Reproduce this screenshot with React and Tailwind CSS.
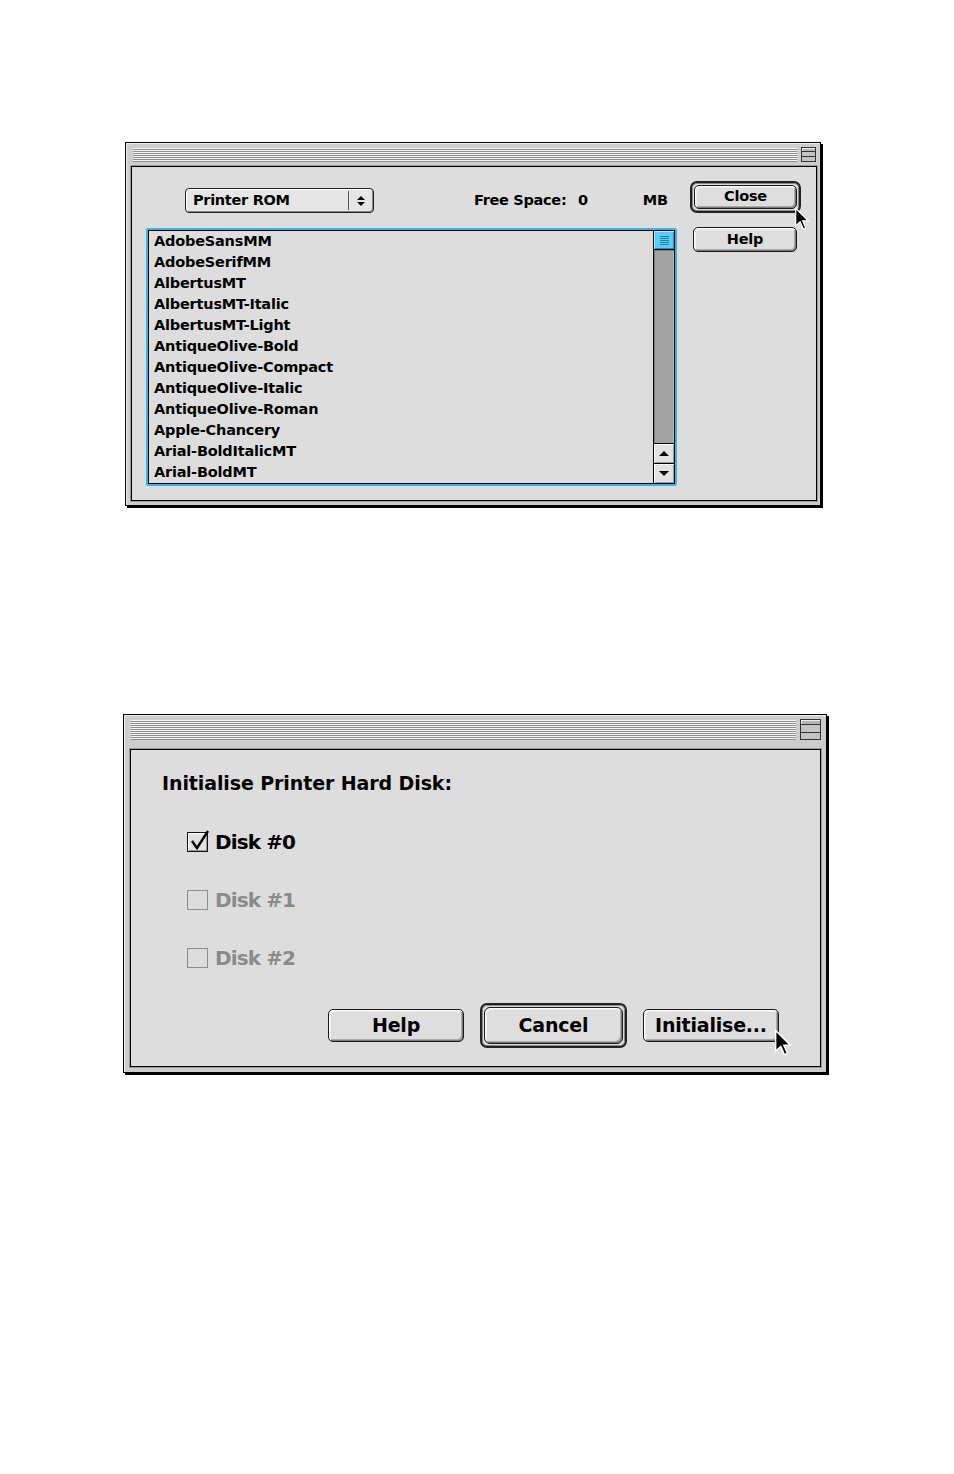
import React from "react";

const font = "font-['DejaVu_Sans',sans-serif]";

const fonts = [
  "AdobeSansMM",
  "AdobeSerifMM",
  "AlbertusMT",
  "AlbertusMT-Italic",
  "AlbertusMT-Light",
  "AntiqueOlive-Bold",
  "AntiqueOlive-Compact",
  "AntiqueOlive-Italic",
  "AntiqueOlive-Roman",
  "Apple-Chancery",
  "Arial-BoldItalicMT",
  "Arial-BoldMT",
];

function Cursor({ className, w = 16, h = 24 }) {
  return (
    <svg className={className} width={w} height={h} viewBox="0 0 12 19">
      <path
        d="M1 1 L1 15 L4.5 11.8 L7 17.5 L9 16.6 L6.6 11 L11 11 Z"
        fill="#000"
        stroke="#fff"
        strokeWidth="1"
        strokeLinejoin="miter"
      />
    </svg>
  );
}

function Btn({ children, className = "" }) {
  return (
    <div
      className={`flex items-center justify-center rounded-[5px] border border-[#1a1a1a] bg-[#dedede] shadow-[inset_1px_1px_0_#fff,inset_2px_2px_0_#eeeeee,inset_-1px_-1px_0_#777,inset_-2px_-2px_0_#aaa] font-bold text-black ${className}`}
    >
      {children}
    </div>
  );
}

function DefaultBtn({ children, className = "", inner = "" }) {
  return (
    <div
      className={`flex items-stretch rounded-[7px] border-2 border-[#222] bg-[#dedede] p-[2px] shadow-[inset_0_0_0_1px_#888] ${className}`}
    >
      <Btn className={`flex-1 ${inner}`}>{children}</Btn>
    </div>
  );
}

function Stripes({ className = "" }) {
  return (
    <div
      className={`bg-[repeating-linear-gradient(to_bottom,#f4f4f4_0px,#f4f4f4_1px,#8e8e8e_1px,#8e8e8e_2px)] ${className}`}
    />
  );
}

function ZoomBox({ className = "" }) {
  return (
    <div
      className={`flex flex-col border border-[#333] bg-[#b5b5b5] shadow-[inset_1px_1px_0_#eee] ${className}`}
    >
      <div className="h-[28%] border-b border-[#333]" />
      <div className="flex-1 border-b border-[#333] bg-[#c4c4c4]" />
      <div className="flex-1 bg-[#c4c4c4]" />
    </div>
  );
}

function Checkbox({ checked, disabled, label }) {
  return (
    <div className="flex h-[24px] items-center">
      <div
        className={`relative h-[20px] w-[21px] border ${
          disabled
            ? "border-[#8d8d8d] bg-[#dcdcdc]"
            : "border-[#111] bg-[#e2e2e2] shadow-[inset_1px_1px_0_#fff,inset_-1px_-1px_0_#999]"
        }`}
      >
        {checked && (
          <svg
            className="absolute left-[1px] top-[-4px]"
            width="22"
            height="22"
            viewBox="0 0 22 22"
          >
            <path
              d="M3 12 L8 19 L19 2"
              fill="none"
              stroke="#000"
              strokeWidth="2.4"
            />
          </svg>
        )}
      </div>
      <span
        className={`ml-[7px] text-[20px] font-bold tracking-[-0.9px] ${
          disabled ? "text-[#8a8a8a]" : "text-black"
        }`}
      >
        {label}
      </span>
    </div>
  );
}

function FontDialog() {
  return (
    <div className="relative ml-[125px] mt-[142px] flex h-[364px] w-[696px] flex-col border border-black bg-[#cdcdcd] shadow-[2px_2px_0_#000,inset_1px_1px_0_#eee]">
      <div className="flex h-[23px] items-center pl-[7px] pr-[4px]">
        <Stripes className="h-[14px] flex-1" />
        <ZoomBox className="ml-[4px] h-[15px] w-[15px]" />
      </div>
      <div className="mb-[4px] ml-[5px] mr-[3px] flex flex-1 border border-black bg-[#dddddd] pl-[14px] pt-[14px] shadow-[0_0_0_1px_#9a9a9a]">
        <div className="flex w-[531px] flex-col">
          <div className="mt-[7px] flex h-[25px] items-center text-[14.5px] font-bold tracking-[-0.3px]">
            <div className="ml-[39px] flex h-[25px] w-[189px] items-stretch rounded-[4px] border border-[#222] bg-[#e6e6e6] shadow-[inset_1px_1px_0_#fff,inset_-1px_-1px_0_#888]">
              <span className="flex flex-1 items-center pl-[7px]">
                Printer ROM
              </span>
              <div className="my-[2px] w-px bg-[#555]" />
              <div className="flex w-[24px] flex-col items-center justify-center gap-[2px]">
                <div className="h-0 w-0 border-x-[4px] border-b-[4px] border-x-transparent border-b-black" />
                <div className="h-0 w-0 border-x-[4px] border-t-[4px] border-x-transparent border-t-black" />
              </div>
            </div>
            <span className="ml-[100px] w-[104px]">Free Space:</span>
            <span>0</span>
            <span className="ml-[55px]">MB</span>
          </div>
          <div className="mt-[15px] h-[258px] w-[531px] rounded-[2px] border-2 border-[#34b4e4]">
            <div className="flex h-full border border-black bg-[#dddddd]">
              <div className="flex-1 overflow-hidden pl-[5px] text-[14.5px] font-bold leading-[21px] tracking-[-0.2px] text-black">
                {fonts.map((f) => (
                  <div key={f} className="h-[21px]">
                    {f}
                  </div>
                ))}
              </div>
              <div className="flex w-[21px] flex-col border-l border-black">
                <div className="flex h-[19px] flex-col items-center justify-center gap-[1px] border-b border-black bg-[#5ccdf5] shadow-[inset_1px_1px_0_#aee8ff,inset_-1px_-1px_0_#1c8fc0]">
                  <div className="h-px w-[9px] bg-[#1f7fae]" />
                  <div className="h-px w-[9px] bg-[#1f7fae]" />
                  <div className="h-px w-[9px] bg-[#1f7fae]" />
                  <div className="h-px w-[9px] bg-[#1f7fae]" />
                  <div className="h-px w-[9px] bg-[#1f7fae]" />
                </div>
                <div className="flex-1 bg-[#a3a3a3] shadow-[inset_1px_1px_0_#7a7a7a,inset_-1px_0_0_#bbb]" />
                <div className="flex h-[20px] items-center justify-center border-t border-black bg-[#e2e2e2] shadow-[inset_1px_1px_0_#fff,inset_-1px_-1px_0_#999]">
                  <div className="h-0 w-0 border-x-[5px] border-b-[5px] border-x-transparent border-b-black" />
                </div>
                <div className="flex h-[20px] items-center justify-center border-t border-black bg-[#e2e2e2] shadow-[inset_1px_1px_0_#fff,inset_-1px_-1px_0_#999]">
                  <div className="h-0 w-0 border-x-[5px] border-t-[5px] border-x-transparent border-t-black" />
                </div>
              </div>
            </div>
          </div>
        </div>
        <div className="ml-[13px] flex flex-col text-[14.5px] tracking-[-0.2px]">
          <DefaultBtn className="h-[32px] w-[111px]">Close</DefaultBtn>
          <Btn className="ml-[3px] mt-[14px] h-[25px] w-[104px]">Help</Btn>
        </div>
      </div>
      <Cursor className="absolute left-[668px] top-[64px]" />
    </div>
  );
}

function InitDialog() {
  return (
    <div className="relative ml-[123px] mt-[208px] flex h-[359px] w-[704px] flex-col border border-black bg-[#cdcdcd] shadow-[2px_2px_0_#000,inset_1px_1px_0_#eee]">
      <div className="flex h-[27px] items-center pl-[7px] pr-[5px] pt-[2px]">
        <Stripes className="h-[20px] flex-1" />
        <ZoomBox className="ml-[4px] h-[21px] w-[21px]" />
      </div>
      <div className="mb-[5px] ml-[6px] mr-[5px] mt-[7px] flex flex-1 flex-col border border-black bg-[#dddddd] pl-[31px] pt-[22px] shadow-[0_0_0_1px_#9a9a9a]">
        <div className="h-[22px] text-[19px] font-bold leading-[22px] tracking-[-0.1px] text-black">
          Initialise Printer Hard Disk:
        </div>
        <div className="ml-[25px] mt-[36px] flex flex-col gap-[34px]">
          <Checkbox checked label="Disk #0" />
          <Checkbox disabled label="Disk #1" />
          <Checkbox disabled label="Disk #2" />
        </div>
        <div className="mr-[41px] mt-[33px] flex items-center justify-end gap-[16px] text-[19px] tracking-[-0.2px]">
          <Btn className="h-[33px] w-[136px]">Help</Btn>
          <DefaultBtn className="h-[45px] w-[147px]" inner="rounded-[6px]">
            Cancel
          </DefaultBtn>
          <Btn className="h-[33px] w-[136px]">Initialise...</Btn>
        </div>
      </div>
      <Cursor className="absolute left-[650px] top-[314px]" w={18} h={28} />
    </div>
  );
}

export default function App() {
  return (
    <div className={`min-h-[1474px] w-full bg-white ${font}`}>
      <div className="flex flex-col">
        <FontDialog />
        <InitDialog />
      </div>
    </div>
  );
}
